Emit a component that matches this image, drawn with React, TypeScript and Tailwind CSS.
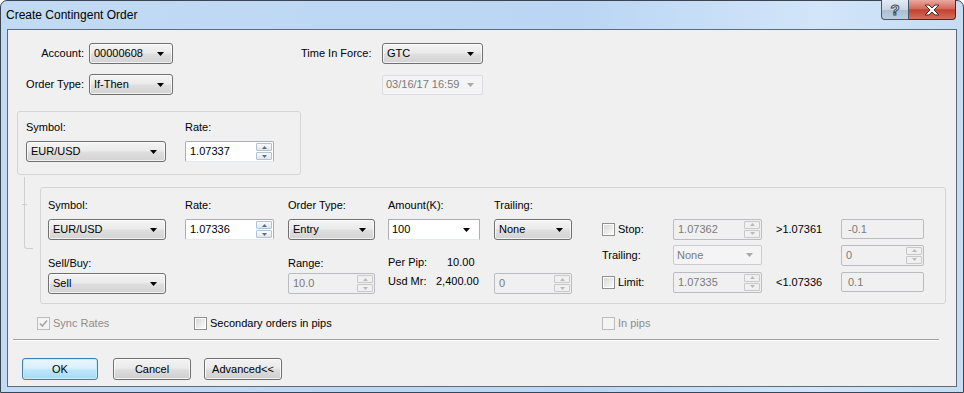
import React from "react";

const FONT = "font-['Liberation_Sans',Arial,sans-serif]";

function Arrow({ disabled = false }: { disabled?: boolean }) {
  return (
    <svg width="7" height="4" viewBox="0 0 7 4" className="shrink-0">
      <path d="M0 0h7L3.5 4z" fill={disabled ? "#a8a8a8" : "#000"} />
    </svg>
  );
}

function Combo({ value, className }: { value: string; className: string }) {
  return (
    <div
      className={`flex h-[21px] items-center justify-between rounded-[3px] border border-[#707070] bg-[linear-gradient(#f4f4f4,#ebebeb_45%,#dedede_55%,#d3d3d3)] pl-[4px] pr-[8px] shadow-[inset_0_0_0_1px_rgba(255,255,255,0.7)] ${className}`}
    >
      <span>{value}</span>
      <Arrow />
    </div>
  );
}

function DisabledCombo({ value, className }: { value: string; className: string }) {
  return (
    <div
      className={`flex h-[20px] items-center justify-between rounded-[2px] border border-[#c9ccd0] bg-[#f4f4f4] pl-[3px] pr-[8px] text-[#7a7a7a] ${className}`}
    >
      <span>{value}</span>
      <Arrow disabled />
    </div>
  );
}

function Spin({ disabled = false }: { disabled?: boolean }) {
  const tri = disabled ? "#b9b9b9" : "#5a6f86";
  const btn = disabled
    ? "border-[#c8c8c8] bg-[#f0f0f0]"
    : "border-[#b4c1ce] bg-[linear-gradient(#fafafa,#e2e6ea)]";
  return (
    <div className="mr-[1px] flex h-[17px] w-[16px] flex-col gap-[1px]">
      <div className={`flex h-[8px] items-center justify-center rounded-[1px] border ${btn}`}>
        <svg width="5" height="3" viewBox="0 0 5 3">
          <path d="M0 3h5L2.5 0z" fill={tri} />
        </svg>
      </div>
      <div className={`flex h-[8px] items-center justify-center rounded-[1px] border ${btn}`}>
        <svg width="5" height="3" viewBox="0 0 5 3">
          <path d="M0 0h5L2.5 3z" fill={tri} />
        </svg>
      </div>
    </div>
  );
}

function SpinBox({ value, className, disabled = false }: { value: string; className: string; disabled?: boolean }) {
  return (
    <div
      className={`flex h-[21px] items-center rounded-[2px] border ${
        disabled ? "border-[#b9bcc0] bg-[#f0f0f0] text-[#7a7a7a]" : "border-[#abadb3] border-b-[#e3e9ef] bg-white"
      } ${className}`}
    >
      <span className="flex-1 pl-[4px]">{value}</span>
      <Spin disabled={disabled} />
    </div>
  );
}

function TextBox({ value, className }: { value: string; className: string }) {
  return (
    <div
      className={`flex h-[20px] items-center rounded-[2px] border border-[#b9bcc0] bg-[#f0f0f0] pl-[6px] text-[#7a7a7a] ${className}`}
    >
      {value}
    </div>
  );
}

function Check({ checked = false, disabled = false }: { checked?: boolean; disabled?: boolean }) {
  return (
    <span
      className={`flex h-[13px] w-[13px] shrink-0 items-center justify-center border ${
        disabled ? "border-[#bcbcbc] bg-[#f4f4f4]" : "border-[#8e8f8f] bg-white"
      }`}
    >
      <span
        className={`flex h-[9px] w-[9px] items-center justify-center ${
          disabled ? "bg-[#f4f4f4]" : "bg-[linear-gradient(135deg,#d8d8d8,#fafafa)]"
        }`}
      >
        {checked && (
          <svg width="9" height="9" viewBox="0 0 9 9">
            <path d="M1 4.5l2.3 2.5L8 1.5" stroke="#a6a6a6" strokeWidth="1.6" fill="none" />
          </svg>
        )}
      </span>
    </span>
  );
}

function Button({ label, className, primary = false }: { label: string; className: string; primary?: boolean }) {
  return (
    <div
      className={`flex h-[22px] items-center justify-center rounded-[3px] border ${
        primary
          ? "border-[#3c7fb1] bg-[linear-gradient(#eaf6fd,#d9f0fc_45%,#bee6fd_55%,#a7d9f5)] shadow-[inset_0_0_0_1px_#c5ecfb]"
          : "border-[#707070] bg-[linear-gradient(#f2f2f2,#ebebeb_45%,#dddddd_55%,#cfcfcf)] shadow-[inset_0_0_0_1px_rgba(255,255,255,0.75)]"
      } ${className}`}
    >
      {label}
    </div>
  );
}

export default function App() {
  return (
    <div className={`${FONT} h-[393px] w-[964px] overflow-hidden bg-white text-[11px] leading-[13px] text-black`}>
      <div className="relative flex h-[393px] w-[964px] flex-col rounded-t-[7px] border border-[#3b4452] bg-[linear-gradient(90deg,#c2dbf4,#bad6f4_60%,#d2e5f9_85%,#c6dcf3)]">
        {/* title */}
        <div className="flex h-[28px] items-center pl-[5px] pt-[1px] text-[12px] text-black">Create Contingent Order</div>
        <div className="absolute right-[7px] top-[-1px] flex">
          <div className="flex h-[20px] w-[28px] items-center justify-center rounded-bl-[4px] border border-t-0 border-[#4a5565] bg-[linear-gradient(#e3ebf4,#c8d6e5_50%,#aabdd2_52%,#bccde0)]">
            <span className="text-[15px] font-bold leading-[15px] text-white [-webkit-text-stroke:1px_#3d4a5c]">?</span>
          </div>
          <div className="flex h-[20px] w-[47px] items-center justify-center rounded-br-[4px] border border-l-0 border-t-0 border-[#4a2a28] bg-[linear-gradient(#e9a99f,#d36a5c_45%,#c2412f_52%,#d6705a)]">
            <svg width="16" height="12" viewBox="0 0 16 12">
              <path
                d="M1 1h4l3 3 3-3h4l-5 5 5 5h-4l-3-3-3 3H1l5-5z"
                fill="#fff"
                stroke="#4b2a26"
                strokeWidth="1"
                strokeLinejoin="round"
              />
            </svg>
          </div>
        </div>

        {/* client area */}
        <div className="mx-[6px] flex h-[358px] flex-col border border-[#5d6c7b] bg-[#f0f0f0]">
          {/* row 1 */}
          <div className="mt-[13px] flex h-[21px] items-center">
            <div className="w-[76px] text-right">Account:</div>
            <Combo value="00000608" className="ml-[5px] w-[84px]" />
            <div className="ml-[128px] w-[81px]">Time In Force:</div>
            <Combo value="GTC" className="w-[101px]" />
          </div>
          {/* row 2 */}
          <div className="mt-[10px] flex h-[21px] items-center">
            <div className="w-[76px] text-right">Order Type:</div>
            <Combo value="If-Then" className="ml-[5px] w-[84px]" />
            <DisabledCombo value="03/16/17 16:59" className="ml-[209px] w-[101px] border-[#d9dde2]" />
          </div>

          {/* primary symbol panel */}
          <div className="ml-[9px] mt-[16px] flex h-[64px] w-[284px] rounded-[3px] border border-[#d5d5d5] pl-[8px] pt-[9px]">
            <div className="flex w-[140px] flex-col">
              <div className="h-[13px]">Symbol:</div>
              <Combo value="EUR/USD" className="mt-[7px] w-[140px]" />
            </div>
            <div className="ml-[19px] flex w-[89px] flex-col">
              <div className="h-[13px]">Rate:</div>
              <SpinBox value="1.07337" className="mt-[7px] w-[89px]" />
            </div>
          </div>

          {/* connector + secondary panel */}
          <div className="flex items-start">
            <div className="relative ml-[16px] mt-[2px] h-[72px] w-[9px] rounded-bl-[3px] border-b border-l border-[#cfcfcf]">
              <div className="absolute left-[-3px] top-[27px] h-[1px] w-[5px] bg-[#cfcfcf]" />
            </div>
            <div className="ml-[7px] mt-[12px] flex h-[117px] w-[906px] rounded-[3px] border border-[#d5d5d5] pl-[7px] pt-[11px]">
              {/* col1 */}
              <div className="flex w-[118px] flex-col">
                <div className="h-[13px]">Symbol:</div>
                <Combo value="EUR/USD" className="mt-[7px] w-[118px]" />
                <div className="mt-[17px] h-[13px]">Sell/Buy:</div>
                <Combo value="Sell" className="mt-[3px] w-[118px]" />
              </div>
              {/* col2 */}
              <div className="ml-[19px] flex w-[89px] flex-col">
                <div className="h-[13px]">Rate:</div>
                <SpinBox value="1.07336" className="mt-[7px] w-[89px]" />
              </div>
              {/* col3 */}
              <div className="ml-[14px] flex w-[87px] flex-col">
                <div className="h-[13px]">Order Type:</div>
                <Combo value="Entry" className="mt-[7px] w-[87px]" />
                <div className="mt-[17px] h-[13px]">Range:</div>
                <SpinBox value="10.0" disabled className="mt-[3px] w-[87px]" />
              </div>
              {/* col4 */}
              <div className="ml-[13px] flex w-[92px] flex-col">
                <div className="h-[13px]">Amount(K):</div>
                <div className="mt-[7px] flex h-[21px] w-[92px] items-center justify-between border border-[#abadb3] border-b-[#e3e9ef] bg-white pl-[3px] pr-[9px]">
                  <span>100</span>
                  <Arrow />
                </div>
                <div className="mt-[16px] flex h-[13px]">
                  <span className="w-[59px]">Per Pip:</span>
                  <span>10.00</span>
                </div>
                <div className="mt-[6px] flex h-[13px]">
                  <span className="w-[48px]">Usd Mr:</span>
                  <span>2,400.00</span>
                </div>
              </div>
              {/* col5 */}
              <div className="ml-[14px] flex w-[78px] flex-col">
                <div className="h-[13px]">Trailing:</div>
                <Combo value="None" className="mt-[7px] w-[78px]" />
                <SpinBox value="0" disabled className="mt-[33px] w-[78px]" />
              </div>
              {/* right block */}
              <div className="ml-[30px] mt-[20px] flex flex-col">
                <div className="flex h-[20px] items-center">
                  <div className="flex w-[71px] items-center gap-[3px]">
                    <Check />
                    <span>Stop:</span>
                  </div>
                  <SpinBox value="1.07362" disabled className="h-[20px] w-[89px]" />
                  <div className="ml-[14px] w-[65px]">&gt;1.07361</div>
                  <TextBox value="-0.1" className="w-[83px]" />
                </div>
                <div className="mt-[6px] flex h-[20px] items-center">
                  <div className="w-[71px]">Trailing:</div>
                  <DisabledCombo value="None" className="w-[89px]" />
                  <div className="ml-[14px] w-[65px]" />
                  <SpinBox value="0" disabled className="h-[20px] w-[83px]" />
                </div>
                <div className="mt-[7px] flex h-[20px] items-center">
                  <div className="flex w-[71px] items-center gap-[3px]">
                    <Check />
                    <span>Limit:</span>
                  </div>
                  <SpinBox value="1.07335" disabled className="h-[20px] w-[89px]" />
                  <div className="ml-[14px] w-[65px]">&lt;1.07336</div>
                  <TextBox value="0.1" className="w-[83px]" />
                </div>
              </div>
            </div>
          </div>

          {/* options row */}
          <div className="mt-[13px] flex h-[13px] items-center">
            <div className="ml-[29px] flex w-[157px] items-center gap-[3px] text-[#8d8d8d]">
              <Check checked disabled />
              <span>Sync Rates</span>
            </div>
            <div className="flex w-[408px] items-center gap-[3px]">
              <Check />
              <span>Secondary orders in pips</span>
            </div>
            <div className="flex items-center gap-[3px] text-[#8d8d8d]">
              <Check disabled />
              <span>In pips</span>
            </div>
          </div>

          {/* separator */}
          <div className="ml-[5px] mt-[9px] h-[2px] w-[926px] border-b border-t border-b-white border-t-[#a0a0a0]" />

          {/* buttons */}
          <div className="mt-[17px] flex">
            <Button label="OK" primary className="ml-[14px] w-[76px]" />
            <Button label="Cancel" className="ml-[15px] w-[78px]" />
            <Button label="Advanced<<" className="ml-[13px] w-[78px]" />
          </div>
        </div>
      </div>
    </div>
  );
}
